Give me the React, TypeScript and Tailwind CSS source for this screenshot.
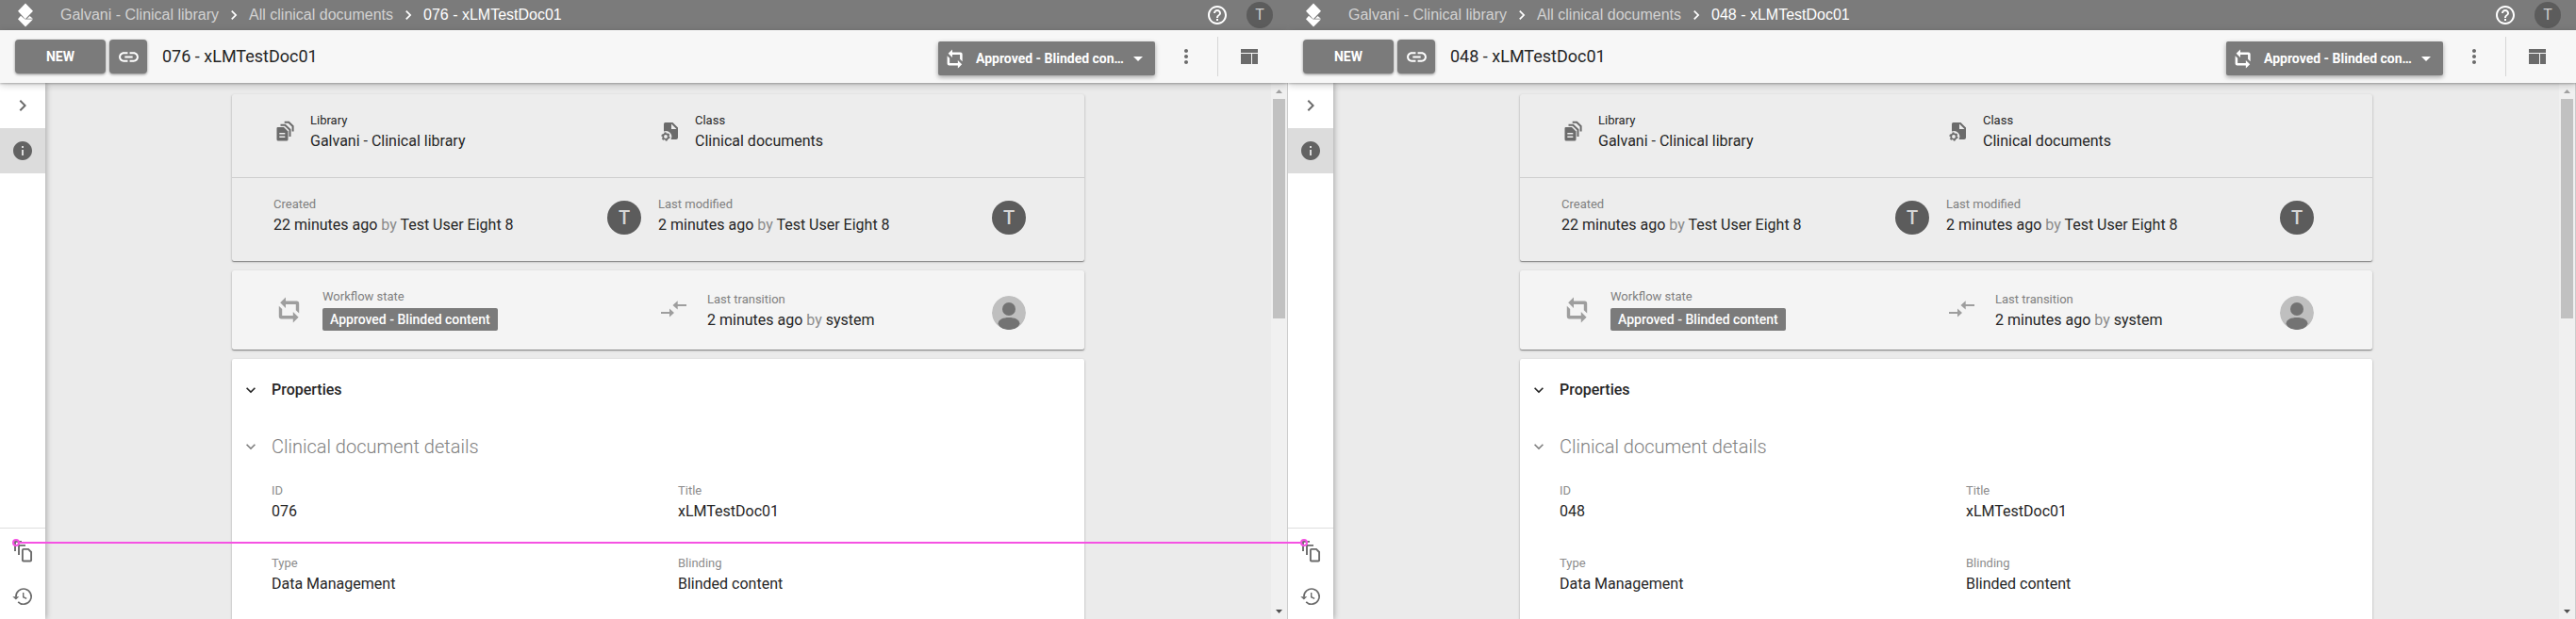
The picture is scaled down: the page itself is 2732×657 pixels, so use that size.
import React from "react";
import { MdArrowDropDown, MdChevronRight, MdExpandMore, MdHelpOutline, MdInfo, MdLink, MdMoreVert } from "react-icons/md";

type Doc = { id: string; title: string };

const docs: Doc[] = [
  { id: "076", title: "xLMTestDoc01" },
  { id: "048", title: "xLMTestDoc01" },
];

function Logo() {
  return (
    <svg width="18" height="26" viewBox="0 0 18 26" fill="#fff" aria-hidden="true">
      <path d="M9 0.5 17 8.8 8.8 17.2 1 8.8Z" />
      <path d="M4 13.8 1 17.2 9 25.4 17 17.6H8.6Z" />
      <path d="M13.6 14 16.8 16.8H10.6Z" />
    </svg>
  );
}

function WorkflowIcon({ className }: { className: string }) {
  return (
    <svg className={className} viewBox="0 0 24 28" fill="currentColor" aria-hidden="true">
      <path d="M2.2 6.3 8 0.6V4.6H19.5A2.7 2.7 0 0 1 22.200 7.300V17.500L18.800 14.200V8.100H8V12Z" />
      <path d="M21.600 21.700 15.800 27.400V23.400H3.500A2.700 2.700 0 0 1 0.800 20.700V9.800L4.200 13V19.900H15.800V16Z" />
    </svg>
  );
}

function FilesIcon() {
  return (
    <svg className="h-6 w-6 shrink-0" viewBox="0 0 24 24" aria-hidden="true">
      <path fill="#6b6b6b" d="M3.5 8H10l4.5 4.5V21a1.5 1.5 0 0 1-1.5 1.5H4A1.5 1.5 0 0 1 2.500 21V9A1.200 1.200 0 0 1 3.500 8Z" />
      <path stroke="#ededed" strokeWidth="1.600" d="M5.300 14.800H11.300M5.300 18.300H11.300" />
      <path fill="none" stroke="#6b6b6b" strokeWidth="2" d="M6.500 5.700H11.300L16.500 10.700V18M10.700 2.700H15.200L19.600 7V12.600" />
    </svg>
  );
}

function FileCogIcon() {
  return (
    <svg className="h-6 w-6 shrink-0" viewBox="0 0 24 24" aria-hidden="true">
      <path fill="#6b6b6b" d="M6.500 3H14.500L20 8.500V19A2 2 0 0 1 18 21H12.500A6 6 0 0 0 5 12.500V4.500A1.500 1.500 0 0 1 6.500 3Z" />
      <path fill="#ededed" d="M13 4.500V10H18.500Z" />
      <circle cx="7" cy="18" r="2.800" fill="none" stroke="#6b6b6b" strokeWidth="1.700" />
      <circle cx="7" cy="18" r="4" fill="none" stroke="#6b6b6b" strokeWidth="1.300" strokeDasharray="2.100 2.090" />
    </svg>
  );
}

function TransitionIcon() {
  return (
    <svg className="h-6 w-8 shrink-0" viewBox="0 0 32 24" fill="#9e9e9e" aria-hidden="true">
      <path d="M3 14.900H12V11.500L17 15.900 12 20.500V17H3Z" />
      <path d="M30 9H20.700V12.500L15.500 7.900 20.700 3.200V6.900H30Z" />
    </svg>
  );
}

function StackIcon() {
  return (
    <svg className="h-6 w-6" viewBox="0 0 24 24" fill="none" stroke="#6b6b6b" strokeWidth="1.900" aria-hidden="true">
      <path d="M12.900 9.900H18L21.100 13V21.500A1 1 0 0 1 20.100 22.500H12.900A1 1 0 0 1 11.900 21.500V10.900A1 1 0 0 1 12.900 9.900Z" />
      <path d="M15 5.900H8V16M11 1.900H4V12" />
    </svg>
  );
}

function HistoryIcon() {
  return (
    <svg className="h-6 w-6" viewBox="0 0 24 24" fill="none" stroke="#6b6b6b" strokeWidth="1.700" aria-hidden="true">
      <path d="M4.900 12.500A8.100 8.100 0 1 1 7.200 17.800" />
      <path fill="#6b6b6b" stroke="none" d="M1.300 12.200H8.300L4.900 15.400Z" />
      <path strokeWidth="1.400" d="M12.700 8V12.700L16.200 14.400" />
    </svg>
  );
}

function LayoutIcon() {
  return (
    <svg className="h-4 w-[18px]" viewBox="0 0 18 16" fill="#6b6b6b" aria-hidden="true">
      <path d="M0 0H18V4H0ZM0 5H11V16H0ZM12 5H18V16H12Z" />
    </svg>
  );
}

function PersonAvatar() {
  return (
    <svg className="mr-[18px] h-9 w-9 shrink-0 rounded-full" viewBox="0 0 36 36" role="img" aria-label="system">
      <circle cx="18" cy="18" r="18" fill="#bfbfbf" />
      <circle cx="18" cy="14" r="7" fill="#737373" />
      <path fill="#737373" d="M6.500 29.500C7 25 12 23 18 23S29 25 29.500 29.500C28 34 23 36 18 36S8 34 6.500 29.500Z" />
    </svg>
  );
}

function UserAvatar() {
  return (
    <span className="mr-[18px] flex h-9 w-9 shrink-0 items-center justify-center rounded-full bg-[#5c5c5c] text-xl font-medium text-[#d6d6d6]">T</span>
  );
}

function Stamp({ label, when, who }: { label: string; when: string; who: string }) {
  return (
    <div className="min-w-0 flex-1">
      <div className="text-[13px] leading-4 text-[#808080]">{label}</div>
      <div className="truncate text-base leading-7">
        {when} <span className="text-[#8a8a8a]">by</span> {who}
      </div>
    </div>
  );
}

function Labelled({ label, value }: { label: string; value: string }) {
  return (
    <div className="min-w-0 flex-1">
      <div className="text-[13px] leading-4">{label}</div>
      <div className="truncate text-base leading-7">{value}</div>
    </div>
  );
}

function Field({ label, value }: { label: string; value: string }) {
  return (
    <div>
      <dt className="text-[13px] leading-4 text-[#8c8c8c]">{label}</dt>
      <dd className="text-base leading-7">{value}</dd>
    </div>
  );
}

function Panel({ doc }: { doc: Doc }) {
  const name = `${doc.id} - ${doc.title}`;
  const card = "rounded-[2px] shadow-[0_1px_1px_rgba(0,0,0,0.35),0_1px_3px_rgba(0,0,0,0.2)]";
  return (
    <section className="flex h-screen min-w-0 flex-1 flex-col overflow-hidden">
      <header className="flex h-8 shrink-0 items-center bg-[#7b7b7b] pr-4 pl-[18px] text-white">
        <Logo />
        <nav className="ml-7 flex items-center font-['Liberation_Sans',sans-serif] text-base leading-6" aria-label="Breadcrumb">
          <a href="#library" className="text-[#d2d2d2]">Galvani - Clinical library</a>
          <MdChevronRight className="mx-1.5 h-5 w-5" />
          <a href="#documents" className="text-[#d2d2d2]">All clinical documents</a>
          <MdChevronRight className="mx-1.5 h-5 w-5" />
          <a href="#document">{name}</a>
        </nav>
        <button type="button" aria-label="Help" className="ml-auto">
          <MdHelpOutline className="h-6 w-6" />
        </button>
        <button type="button" className="ml-[19px] flex h-7 w-7 items-center justify-center rounded-full bg-[#5c5c5c] text-base text-[#cfcfcf]">T</button>
      </header>

      <div className="relative z-10 flex h-14 shrink-0 items-center bg-[#f7f7f7] pr-8 pl-4 shadow-[0_1px_2px_rgba(0,0,0,0.25),0_2px_8px_rgba(0,0,0,0.2)]">
        <button type="button" className="h-9 w-24 rounded bg-[#7b7b7b] text-sm font-bold text-white shadow-[0_1px_3px_rgba(0,0,0,0.45)]">NEW</button>
        <button type="button" aria-label="Copy link" className="ml-1 flex h-9 w-10 items-center justify-center rounded bg-[#7b7b7b] text-white shadow-[0_1px_3px_rgba(0,0,0,0.45)]">
          <MdLink className="h-[25px] w-[25px]" />
        </button>
        <h1 className="ml-4 text-lg">{name}</h1>
        <button type="button" className="mt-1 ml-auto flex h-9 w-[230px] items-center rounded-[2px] bg-[#7b7b7b] pl-[9px] text-sm font-bold whitespace-nowrap text-white shadow-[0_2px_5px_rgba(0,0,0,0.35)]">
          <WorkflowIcon className="h-[21px] w-[18px] shrink-0" />
          <span className="ml-[13px] flex-1 text-left">Approved - Blinded con…</span>
          <MdArrowDropDown className="mr-1.5 h-6 w-6 shrink-0" />
        </button>
        <button type="button" aria-label="More actions" className="ml-[21px]">
          <MdMoreVert className="h-6 w-6 text-[#6b6b6b]" />
        </button>
        <div className="ml-[21px] h-[42px] w-px bg-[#d6d6d6]" />
        <button type="button" aria-label="Layout" className="ml-6">
          <LayoutIcon />
        </button>
      </div>

      <div className="flex min-h-0 flex-1">
        <aside className="z-[1] flex w-12 shrink-0 flex-col bg-white shadow-[1px_0_6px_rgba(0,0,0,0.3)]">
          <button type="button" aria-label="Expand" className="flex h-12 items-center justify-center text-[#6b6b6b]">
            <MdChevronRight className="h-6 w-6" />
          </button>
          <button type="button" aria-label="Information" className="flex h-12 items-center justify-center bg-[#dcdcdc] text-[#636363]">
            <MdInfo className="h-6 w-6" />
          </button>
          <div className="mt-auto border-t border-[#dedede]">
            <button type="button" aria-label="Related documents" className="flex h-12 w-full items-center justify-center">
              <StackIcon />
            </button>
            <button type="button" aria-label="History" className="flex h-12 w-full items-center justify-center">
              <HistoryIcon />
            </button>
          </div>
        </aside>

        <main className="min-w-0 flex-1 overflow-hidden bg-[#ebebeb] pt-3">
          <div className="mx-auto flex max-w-[904px] flex-col gap-2.5">
            <div className={`bg-[#ededed] ${card}`}>
              <div className="grid h-[88px] grid-cols-2 px-11 pt-5">
                <div className="flex gap-3.5">
                  <div className="mt-[7px] pl-px"><FilesIcon /></div>
                  <Labelled label="Library" value="Galvani - Clinical library" />
                </div>
                <div className="flex gap-3.5">
                  <div className="mt-[7px] pl-px"><FileCogIcon /></div>
                  <Labelled label="Class" value="Clinical documents" />
                </div>
              </div>
              <div className="grid h-[89px] grid-cols-2 border-t border-[#cecece] px-11 pt-5">
                <div className="flex">
                  <Stamp label="Created" when="22 minutes ago" who="Test User Eight 8" />
                  <div className="mt-1"><UserAvatar /></div>
                </div>
                <div className="flex">
                  <Stamp label="Last modified" when="2 minutes ago" who="Test User Eight 8" />
                  <div className="mt-1"><UserAvatar /></div>
                </div>
              </div>
            </div>

            <div className={`grid h-[84px] grid-cols-2 bg-[#f4f4f4] px-11 ${card}`}>
              <div className="flex items-start pt-5">
                <WorkflowIcon className="mt-2 ml-[5px] h-7 w-6 shrink-0 text-[#9e9e9e]" />
                <div className="ml-[23px]">
                  <div className="text-[13px] leading-4 text-[#808080]">Workflow state</div>
                  <div className="mt-1 flex h-6 items-center rounded-[2px] bg-[#7b7b7b] px-2 text-sm font-medium text-white">Approved - Blinded content</div>
                </div>
              </div>
              <div className="flex items-start pt-[23px]">
                <div className="mt-1.5 mr-5"><TransitionIcon /></div>
                <Stamp label="Last transition" when="2 minutes ago" who="system" />
                <div className="mt-1"><PersonAvatar /></div>
              </div>
            </div>

            <div className={`bg-white pt-[15px] pl-[42px] ${card}`}>
              <h2 className="-ml-8 flex h-9 items-center text-base font-medium">
                <MdExpandMore className="mr-3 h-5 w-5" />
                Properties
              </h2>
              <h3 className="mt-[26px] -ml-8 flex h-8 items-center text-xl font-light text-[#808080]">
                <MdExpandMore className="mr-3 h-5 w-5" />
                Clinical document details
              </h3>
              <dl className="mt-[23px] grid grid-cols-2 gap-y-[33px] pb-16">
                <Field label="ID" value={doc.id} />
                <Field label="Title" value={doc.title} />
                <Field label="Type" value="Data Management" />
                <Field label="Blinding" value="Blinded content" />
              </dl>
            </div>
          </div>
        </main>

        <div className="flex w-[18px] shrink-0 flex-col items-center border-r border-[#cccccc] bg-[#f0f0f0]" aria-hidden="true">
          <div className="flex h-[17px] shrink-0 items-center">
            <svg width="7" height="4" viewBox="0 0 7 4"><path d="M0 4 3.500 0 7 4Z" fill="#a0a0a0" /></svg>
          </div>
          <div className="h-[41%] w-[13px] bg-[#c1c1c1]" />
          <div className="mt-auto flex h-[17px] shrink-0 items-center">
            <svg width="7" height="4" viewBox="0 0 7 4"><path d="M0 0 3.500 4 7 0Z" fill="#505050" /></svg>
          </div>
        </div>
      </div>
    </section>
  );
}

export default function App() {
  return (
    <div className="relative flex h-screen overflow-hidden bg-white font-[Roboto,sans-serif] text-[#262626]">
      {docs.map((doc) => (
        <Panel key={doc.id} doc={doc} />
      ))}
      <div className="pointer-events-none absolute bottom-[77px] left-[13px] z-20 flex w-[calc(50%+8px)] items-center">
        <span className="h-2 w-2 shrink-0 rounded-full border-2 border-[#f552e3]" />
        <span className="h-0.5 flex-1 bg-[#f552e3]" />
        <span className="h-2 w-2 shrink-0 rounded-full border-2 border-[#f552e3]" />
      </div>
    </div>
  );
}
